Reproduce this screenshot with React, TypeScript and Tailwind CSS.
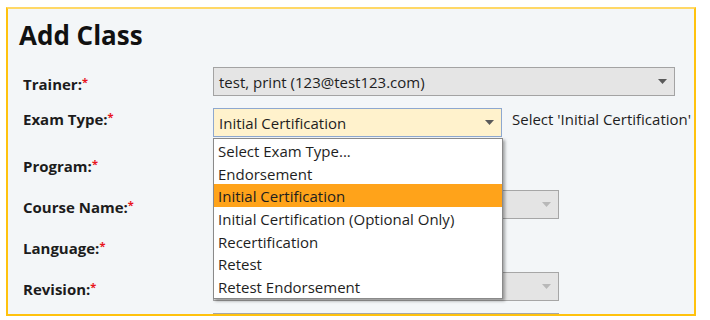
import React from "react";

const font = "font-['Open_Sans',_'Noto_Sans',_sans-serif]";

function Arrow({ muted = false }: { muted?: boolean }) {
  return (
    <svg width="9" height="5" viewBox="0 0 9 5" className="shrink-0">
      <path d="M0 0H9L4.5 5Z" fill={muted ? "#b8b8b8" : "#5a5a5a"} />
    </svg>
  );
}

function Label({ text, pad = "pt-[7px]" }: { text: string; pad?: string }) {
  return (
    <div className={`w-[190px] shrink-0 ${pad} text-[15px] font-bold leading-[20px] text-[#1c1c1c]`}>
      {text}
      <span className="relative -top-[4px] text-[11px] text-[#e8141c]">*</span>
    </div>
  );
}

function Select({
  value,
  width,
  tone = "disabled",
}: {
  value?: string;
  width: string;
  tone?: "disabled" | "gray" | "focus";
}) {
  const toneCls =
    tone === "focus"
      ? "bg-[#fff2cc] border-[#8ea8cf]"
      : tone === "gray"
        ? "bg-[#e5e5e5] border-[#a3a3a3]"
        : "bg-[#e4e4e4] border-[#a6a6a6]";
  return (
    <div className={`${width} ${toneCls} flex h-[29px] items-center justify-between border pl-[5px] pr-[7px]`}>
      <span className="text-[15px] leading-[20px] text-[#1e1e1e]">{value}</span>
      <Arrow muted={tone === "disabled"} />
    </div>
  );
}

const options = [
  "Select Exam Type...",
  "Endorsement",
  "Initial Certification",
  "Initial Certification (Optional Only)",
  "Recertification",
  "Retest",
  "Retest Endorsement",
];

export default function App() {
  return (
    <div className={`${font} h-[320px] w-[710px] bg-white pl-[6px] pt-[7px]`}>
      <div className="relative h-[309px] w-[690px] overflow-hidden border-2 border-[#ffc20e] border-t-[#ffd866] bg-[#f3f6f8] pl-[15px]">
        <h1 className="-ml-[4px] h-[58px] pt-[10px] text-[26px] font-bold leading-[32px] text-[#111]">Add Class</h1>

        <div className="flex h-[41px]">
          <Label text="Trainer:" />
          <Select value="test, print (123@test123.com)" width="w-[462px]" tone="gray" />
        </div>

        <div className="flex h-[41px]">
          <Label text="Exam Type:" pad="pt-[1px]" />
          <Select value="Initial Certification" width="w-[289px]" tone="focus" />
          <span className="ml-[10px] pt-[1px] text-[15px] leading-[20px] whitespace-nowrap text-[#1e1e1e]">
            Select 'Initial Certification'
          </span>
        </div>

        <div className="flex h-[41px]">
          <Label text="Program:" />
          <Select width="w-[285px]" />
        </div>

        <div className="flex h-[41px]">
          <Label text="Course Name:" />
          <Select width="w-[346px]" />
        </div>

        <div className="flex h-[41px]">
          <Label text="Language:" />
          <Select width="w-[285px]" />
        </div>

        <div className="flex h-[41px]">
          <Label text="Revision:" />
          <Select width="w-[346px]" />
        </div>

        <div className="flex h-[41px]">
          <div className="w-[190px] shrink-0" />
          <Select width="w-[346px]" />
        </div>

        <ul className="absolute left-[205px] top-[129px] w-[290px] border border-[#8a8a8a] bg-white shadow-[2px_2px_3px_rgba(0,0,0,0.35)]">
          {options.map((o) => (
            <li
              key={o}
              className={`h-[22.7px] pl-[4px] pt-[2px] text-[15px] leading-[20px] text-[#1e1e1e] ${
                o === "Initial Certification" ? "bg-[#ffa31a]" : ""
              }`}
            >
              {o}
            </li>
          ))}
        </ul>
      </div>
    </div>
  );
}
